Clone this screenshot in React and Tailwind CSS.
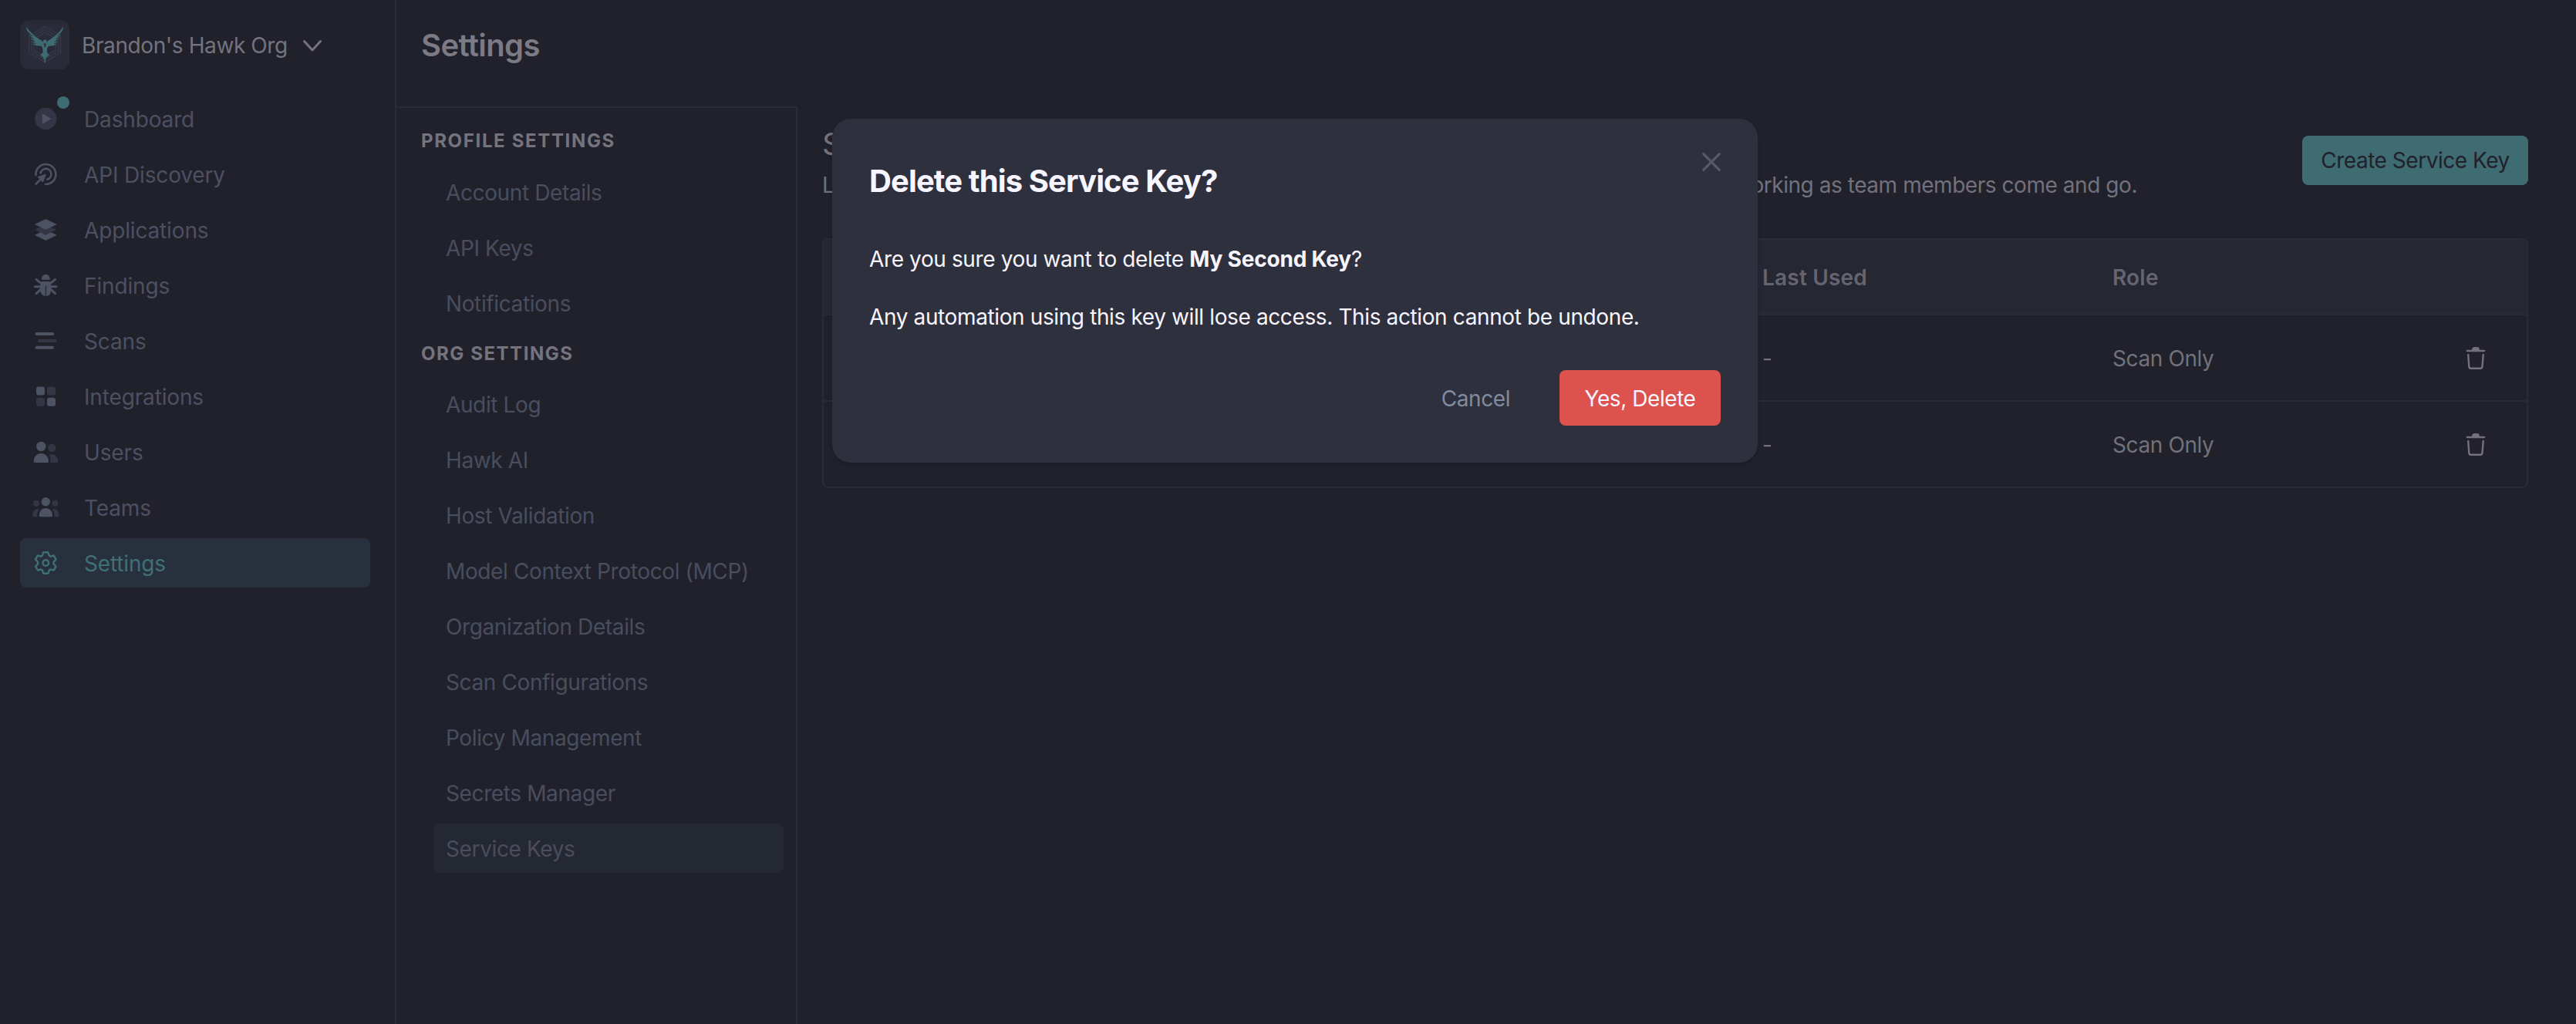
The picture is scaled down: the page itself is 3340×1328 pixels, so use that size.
import React from 'react';

const HawkLogo = () => (
  <svg width="64" height="64" viewBox="0 0 64 64" fill="none">
    <g stroke="#383a47" strokeWidth="1.3">
      <path d="M32.3 8.5 52.5 20.5V42.5L32.3 54.5 11.7 42.5V20.5Z" />
      <path d="M32.3 12.3 49.5 22.3V40.7L32.3 50.7 14.8 40.7V22.3Z" />
      <path d="M32.3 16 46.5 24.2V38.8L32.3 47 17.8 38.8V24.2Z" />
    </g>
    <g fill="#3f6b72">
      <path d="M8 8.3C11.5 14.5 18 21 29.8 28L31.6 33.5 30 37.5 27.5 33.8 21 33.2 15.8 30.8 21.2 31.2 14.2 27.5 20.5 28.6 12 23 18.8 25.4 10.2 18.2 17 22 9.3 14 8.6 12Z" />
      <path d="M56 8.3C52.5 14.5 46.5 21 34.8 28L33 33.5 34.6 37.5 37 33.8 43.4 33.2 48.6 30.8 43.2 31.2 50.2 27.5 43.8 28.6 52.4 23 45.6 25.4 54 18.2 47.4 22 54.9 14 55.5 12Z" />
      <ellipse cx="32.3" cy="28" rx="2.3" ry="2.8" />
      <path d="M29.3 32 32.3 35.5 35.3 32 34.9 42 38.8 46.5 36 45.7 36.8 48.2 34.6 46.8 34.8 49.5 33.4 48.5 32.8 55.5 31.8 55.5 31.2 48.5 29.8 52 29.9 46.8 27.4 48.8 28.3 45.7 25.4 46.5 29.6 42Z" />
    </g>
  </svg>
);

const DashboardIcon = () => (
  <>
    <circle cx="16.3" cy="16" r="14.2" fill="#343545" />
    <path d="M12.8 10.8 21.6 16 12.8 21.2Z" fill="#4e5364" stroke="#4e5364" strokeWidth="2" strokeLinejoin="round" />
  </>
);

const DiscoveryIcon = () => (
  <>
    <g fill="none" stroke="#4e5364" strokeWidth="2.6" strokeLinecap="round">
      <path d="M3.4 17A13 13 0 1 1 16 29" />
      <path d="M9.5 14.5A7 7 0 1 1 18.4 22.6" />
      <path d="M3.6 28.6 12 20.2" />
    </g>
    <path d="M16.3 16 6.2 19.6 12.6 26.2Z" fill="#4e5364" stroke="#4e5364" strokeLinejoin="round" />
  </>
);

const LayersIcon = () => (
  <>
    <path d="M16.3 16.6 29.8 22.9 16.3 29.3 2.8 22.9Z" fill="#4e5364" stroke="#4e5364" strokeLinejoin="round" />
    <path d="M2.3 15.8 16.3 9 30.3 15.8 16.3 22.9Z" fill="#343545" />
    <path d="M16.3 2.6 29.8 9 16.3 15.3 2.8 9Z" fill="#4e5364" stroke="#4e5364" strokeLinejoin="round" />
  </>
);

const BugIcon = () => (
  <>
    <path d="M10.8 8.7C10.8 4.6 13 2 16.3 2S21.8 4.6 21.8 8.7Z" fill="#4e5364" />
    <path d="M11.4 11H21.2C22.7 12.4 23.3 14.5 23.3 17.5V22C23.3 26.8 20.5 30 16.3 30S9.3 26.8 9.3 22V17.5C9.3 14.5 9.9 12.4 11.4 11Z" fill="#4e5364" />
    <path d="M2.5 17.7H9.5M23.1 17.7H30.1M4 8.4 10.5 13.6M28.6 8.4 22.1 13.6M4 26.6 10 21.2M28.6 26.6 22.6 21.2" stroke="#4e5364" strokeWidth="3" strokeLinecap="round" />
    <path d="M16.3 16.5V30" stroke="#343545" strokeWidth="2" />
  </>
);

const ScansIcon = () => (
  <g strokeWidth="4" strokeLinecap="round">
    <path d="M4.6 7H25M4.6 24.7H25" stroke="#4e5364" />
    <path d="M8 16H28.7" stroke="#343545" />
  </g>
);

const IntegrationsIcon = () => (
  <>
    <rect x="4" y="3.5" width="11" height="11" rx="3" fill="#4e5364" />
    <rect x="18" y="3.5" width="11" height="11" rx="3" fill="#343545" />
    <rect x="4" y="17.7" width="11" height="11" rx="3" fill="#343545" />
    <rect x="18" y="17.7" width="11" height="11" rx="3" fill="#4e5364" />
  </>
);

const UsersIcon = () => (
  <>
    <circle cx="10.3" cy="9" r="6.2" fill="#4e5364" />
    <path d="M.7 28.2C.7 22.3 4.6 18 10.3 18S20 22.3 20 28.2Q20 30 18.2 30H2.5Q.7 30 .7 28.2Z" fill="#4e5364" />
    <circle cx="24.3" cy="10.7" r="5.2" fill="#343545" />
    <path d="M20.3 19.8C27 17.3 32.3 21.8 32.3 28Q32.3 30 30.5 30H22.2C23 26 22.6 22.6 20.3 19.8Z" fill="#343545" />
  </>
);

const TeamsIcon = () => (
  <>
    <circle cx="16.3" cy="8.7" r="5.7" fill="#4e5364" />
    <path d="M7.7 26.8C7.7 21 11.2 17 16.3 17S25 21 25 26.8Q25 28.3 23.4 28.3H9.3Q7.7 28.3 7.7 26.8Z" fill="#4e5364" />
    <g fill="#343545">
      <circle cx="4.2" cy="10.8" r="4" />
      <circle cx="28.4" cy="10.8" r="4" />
      <path d="M8 18.5C2.8 16.6-1 21-1 26.5Q-1 28.3.6 28.3H5.4C5 24.6 5.8 21.3 8 18.5Z" />
      <path d="M24.6 18.5C29.8 16.6 33.6 21 33.6 26.5Q33.6 28.3 32 28.3H27.2C27.6 24.6 26.8 21.3 24.6 18.5Z" />
    </g>
  </>
);

const SettingsIcon = () => (
  <g fill="none" stroke="#3f7077" strokeWidth="2.4" strokeLinejoin="round">
    <path d="M14 2.2H18.6Q19.6 2.2 19.8 3.2L20.3 5.6Q20.5 6.5 21.6 7.1T23.7 7.3L25.6 6.6Q26.6 6.2 27.1 7.1L29.2 10.8Q29.7 11.7 28.9 12.4L27.2 13.9Q26.4 14.6 26.4 16T27.2 18.1L28.9 19.6Q29.7 20.3 29.2 21.2L27.1 24.9Q26.6 25.8 25.6 25.4L23.7 24.7Q22.7 24.3 21.6 24.9T20.3 26.6L19.8 28.8Q19.6 29.8 18.6 29.8H14Q13 29.8 12.8 28.8L12.3 26.6Q12.1 25.5 11 24.9T8.9 24.7L7 25.4Q6 25.8 5.5 24.9L3.4 21.2Q2.9 20.3 3.7 19.6L5.4 18.1Q6.2 17.4 6.2 16T5.4 13.9L3.7 12.4Q2.9 11.7 3.4 10.8L5.5 7.1Q6 6.2 7 6.6L8.9 7.3Q9.9 7.7 11 7.1T12.3 5.6L12.8 3.2Q13 2.2 14 2.2Z" />
    <circle cx="16.3" cy="16" r="3.8" />
  </g>
);

const TrashIcon = () => (
  <svg className="mb-0.5" width="26" height="32" viewBox="0 0 26 32" fill="none">
    <path d="M2 7H24" stroke="#72717c" strokeWidth="2.6" strokeLinecap="round" />
    <path d="M8 6.5C8 3.5 9 2 11 2H15C17 2 18 3.5 18 6.5Z" fill="#72717c" />
    <path d="M3.2 11.2 4.3 27.3Q4.5 29.7 6.8 29.7H19Q21.3 29.7 21.5 27.3L22.8 11.2" stroke="#72717c" strokeWidth="2.4" />
  </svg>
);

const navItems = [
  { label: 'Dashboard', Icon: DashboardIcon, dot: true },
  { label: 'API Discovery', Icon: DiscoveryIcon },
  { label: 'Applications', Icon: LayersIcon },
  { label: 'Findings', Icon: BugIcon },
  { label: 'Scans', Icon: ScansIcon },
  { label: 'Integrations', Icon: IntegrationsIcon },
  { label: 'Users', Icon: UsersIcon },
  { label: 'Teams', Icon: TeamsIcon },
  { label: 'Settings', Icon: SettingsIcon, active: true },
];

const profileLinks = ['Account Details', 'API Keys', 'Notifications'];

const orgLinks = [
  'Audit Log',
  'Hawk AI',
  'Host Validation',
  'Model Context Protocol (MCP)',
  'Organization Details',
  'Scan Configurations',
  'Policy Management',
  'Secrets Manager',
  'Service Keys',
];

const serviceKeys = [
  { name: 'My First Key', lastUsed: '-', role: 'Scan Only' },
  { name: 'My Second Key', lastUsed: '-', role: 'Scan Only' },
];

const Sidebar = () => (
  <aside className="w-[514px] shrink-0 border-r-2 border-[#2b2a37] pl-[26px] pr-8 pt-[26px]">
    <div className="flex h-16 items-center mb-8">
      <div className="size-16 rounded-xl bg-[#292b38] overflow-hidden">
        <HawkLogo />
      </div>
      <span className="ml-4 pt-0.5 tracking-[-0.4px] text-[#74737e] whitespace-nowrap">Brandon's Hawk Org</span>
      <svg className="ml-[18px] mt-1" width="28" height="20" viewBox="0 0 28 20" fill="none">
        <path d="M3.5 3.5 14 15 24.5 3.5" stroke="#74737e" strokeWidth="3" strokeLinecap="round" strokeLinejoin="round" />
      </svg>
    </div>
    <nav className="flex flex-col gap-2">
      {navItems.map(({ label, Icon, dot, active }) => (
        <a
          key={label}
          className={`relative flex h-16 items-center rounded-lg pl-[17px] tracking-[-0.15px] ${active ? 'bg-[#28303d] text-[#3f7077]' : 'text-[#4c5061]'}`}
        >
          <svg className="mr-[34px] overflow-visible" width="32" height="32" viewBox="0 0 32 32">
            <Icon />
          </svg>
          <span className="pt-0.5">{label}</span>
          {dot && <span className="absolute left-12 top-[3px] size-4 rounded-full bg-[#3f6b72]" />}
        </a>
      ))}
    </nav>
  </aside>
);

const SettingsLink = ({ label }) => (
  <a
    className={`flex h-16 items-center rounded-lg pl-4 pt-0.5 tracking-[-0.38px] ${label === 'Service Keys' ? 'bg-[#232833] text-[#4c4c5a]' : 'text-[#484e5e]'}`}
  >
    {label}
  </a>
);

const SettingsNav = () => (
  <div className="w-[520px] shrink-0 border-t-2 border-r-2 border-[#2b2a37] pr-4">
    <h2 className="mt-[25px] mb-4 pl-8 text-2xl leading-9 font-bold tracking-[1.65px] text-[#74737e]">PROFILE SETTINGS</h2>
    <div className="flex flex-col gap-2 pl-12">
      {profileLinks.map((label) => <SettingsLink key={label} label={label} />)}
    </div>
    <h2 className="mt-4 mb-[15px] pl-8 text-2xl leading-9 font-bold tracking-[1.55px] text-[#74737e]">ORG SETTINGS</h2>
    <div className="flex flex-col gap-2 pl-12">
      {orgLinks.map((label) => <SettingsLink key={label} label={label} />)}
    </div>
  </div>
);

const ServiceKeys = () => (
  <main className="flex-1 pl-8 pr-[62px] pt-[25px] text-[#72717c]">
    <div className="flex justify-between">
      <div>
        <h2 className="text-[40px] leading-[48px]">Service Keys</h2>
        <p className="mt-[11px] flex w-[1705px] justify-between leading-9 tracking-[-0.45px] whitespace-nowrap">
          <span>Long-lived keys for automation that belong to your organization.</span>
          <span>They keep working as team members come and go.</span>
        </p>
      </div>
      <button className="mt-[13px] h-16 w-[293px] rounded-lg bg-[#3f6b72] tracking-[-0.48px] text-[#21212c]">Create Service Key</button>
    </div>
    <div className="mt-[51px] overflow-hidden rounded-lg border-2 border-[#2b2a37]">
      <div className="grid h-[98px] grid-cols-[1217px_454px_1fr] items-center border-b-2 border-[#2b2a37] bg-[#252733] pt-0.5 font-semibold tracking-[0.2px] text-[#65646f]">
        <span className="pl-4">Name</span>
        <span>Last Used</span>
        <span>Role</span>
      </div>
      {serviceKeys.map((key) => (
        <div
          key={key.name}
          className="grid h-28 grid-cols-[1217px_454px_1fr_79px] items-center border-b-2 border-[#2b2a37] pt-0.5 tracking-[-0.4px] last:h-[110px] last:border-b-0"
        >
          <span className="pl-4">{key.name}</span>
          <span>{key.lastUsed}</span>
          <span>{key.role}</span>
          <TrashIcon />
        </div>
      ))}
    </div>
  </main>
);

const DeleteModal = () => (
  <div className="absolute inset-0 flex items-start justify-center pl-[18px] pt-[154px]">
    <div className="relative h-[446px] w-[1200px] rounded-3xl bg-[#2f303d] px-12 pt-[57px] text-[#f7f5ff] shadow-md">
      <svg className="absolute right-12 top-11" width="24" height="24" viewBox="0 0 24 24">
        <path d="M1.7 1.7 22.3 22.3M22.3 1.7 1.7 22.3" stroke="#555a6b" strokeWidth="3.2" strokeLinecap="round" />
      </svg>
      <h1 className="text-[40px] leading-[48px] font-bold tracking-[-0.88px]">Delete this Service Key?</h1>
      <p className="mt-[59px] leading-9 tracking-[-0.38px]">
        Are you sure you want to delete <b className="font-bold tracking-[-0.2px]">My Second Key</b>?
      </p>
      <p className="mt-[39px] leading-9 tracking-[-0.38px]">
        Any automation using this key will lose access. This action cannot be undone.
      </p>
      <div className="mt-[51px] flex items-center justify-end gap-16 tracking-[-0.43px]">
        <button className="pt-0.5 text-[#7f8ca1]">Cancel</button>
        <button className="h-[72px] w-[209px] rounded-lg bg-[#dd524c] pt-0.5">Yes, Delete</button>
      </div>
    </div>
  </div>
);

export default function App() {
  return (
    <div className="relative flex h-[1328px] w-[3340px] overflow-hidden bg-[#21212c] font-['Inter',sans-serif] text-[28px] leading-9">
      <Sidebar />
      <div className="flex flex-1 flex-col">
        <header className="h-[138px] pl-8 pt-[35px]">
          <h1 className="text-[40px] leading-[48px] font-semibold tracking-[-0.6px] text-[#7b7a85]">Settings</h1>
        </header>
        <div className="flex flex-1">
          <SettingsNav />
          <ServiceKeys />
        </div>
      </div>
      <DeleteModal />
    </div>
  );
}
